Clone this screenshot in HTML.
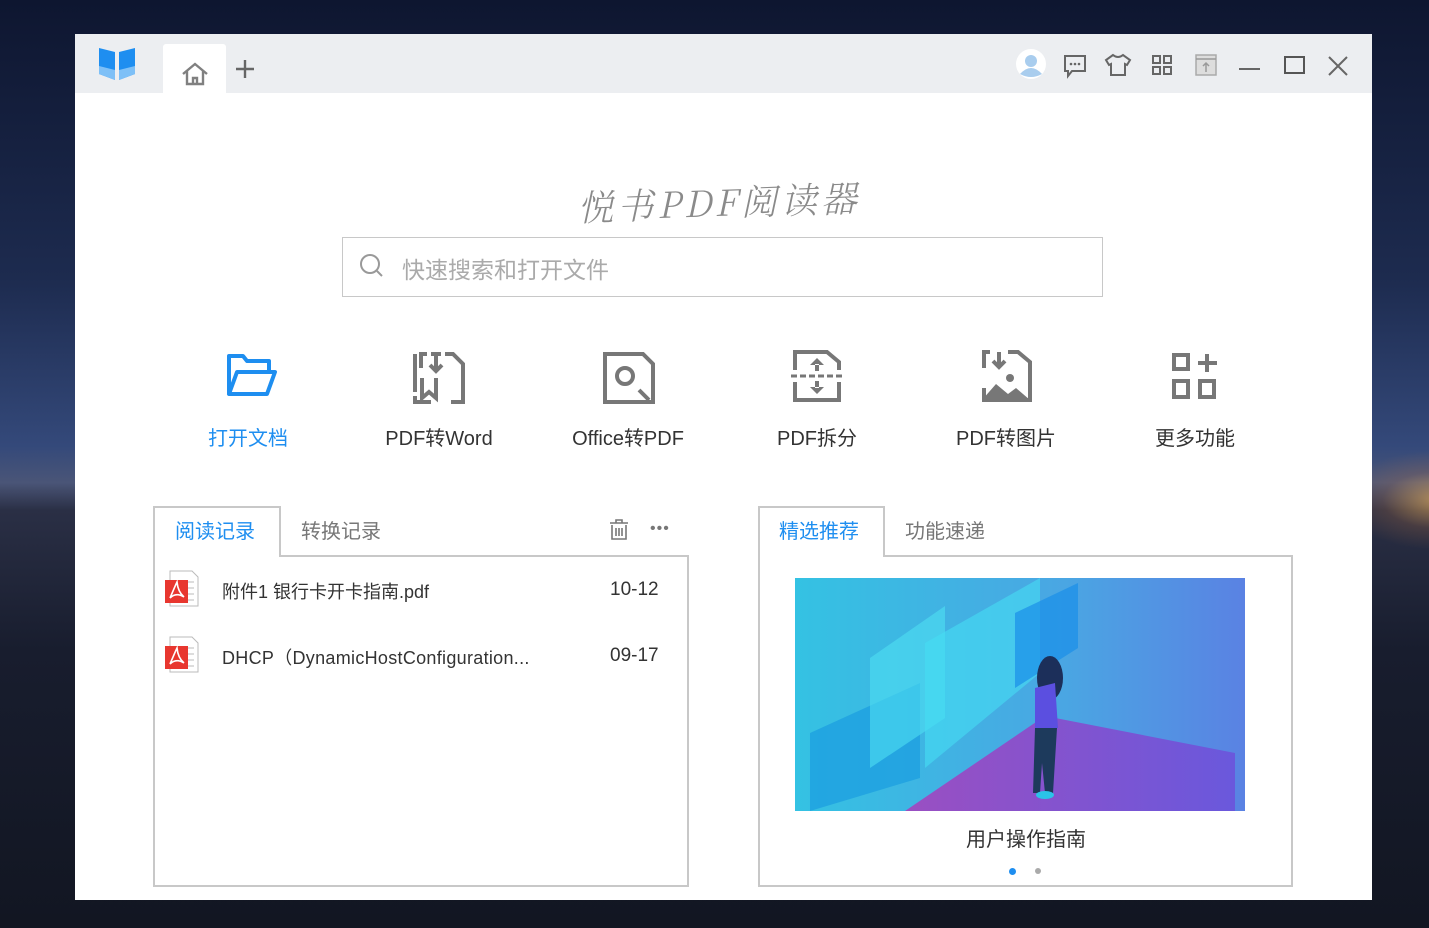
<!DOCTYPE html>
<html><head><meta charset="utf-8"><style>
*{margin:0;padding:0;box-sizing:border-box}
body{width:1429px;height:928px;overflow:hidden;position:relative;font-family:"Liberation Sans","Noto Sans CJK SC",sans-serif;
background:linear-gradient(180deg,#0e1630 0%,#1d2b4f 30%,#34497a 48%,#4a5577 52%,#2a2f45 55%,#181d2e 70%,#121622 100%);}
.glow{position:absolute;left:1340px;top:450px;width:140px;height:100px;background:radial-gradient(ellipse at 70% 50%,rgba(255,190,90,.6),rgba(200,120,60,.2) 40%,transparent 70%)}
.win{position:absolute;left:75px;top:34px;width:1297px;height:866px;background:#fff}
.bar{position:absolute;left:0;top:0;width:1297px;height:59px;background:#eceef1}
.a{position:absolute}
.tab0{left:88px;top:10px;width:63px;height:49px;background:#fff;border-radius:3px 3px 0 0}
.t{position:absolute;white-space:nowrap}
.f{font-size:20px;color:#333;text-align:center;width:160px}
.panel{position:absolute;border:2px solid #c8c8c8;border-top:none}
</style></head><body>
<div class="glow"></div>
<div class="win">
 <div class="bar">
  <svg class="a" style="left:22px;top:12px" width="40" height="36" viewBox="0 0 40 36"><path d="M2 2 L18 6 V34 L2 28Z" fill="#1e8ef0"/><path d="M38 2 L22 6 V34 L38 28Z" fill="#1e8ef0"/><path d="M2 20 L18 24 V34 L2 28Z" fill="#7ec0f7"/><path d="M38 20 L22 24 V34 L38 28Z" fill="#7ec0f7"/></svg>
  <div class="a tab0"></div>
  <svg class="a" style="left:105px;top:28px" width="30" height="24" viewBox="0 0 30 24"><path d="M3 12 L15 2 L27 12 M7 9 V22 H23 V9 M13 22 V16 H17 V22" fill="none" stroke="#808080" stroke-width="2.4"/></svg>
  <svg class="a" style="left:159px;top:24px" width="22" height="22"><path d="M11 2V20M2 11H20" stroke="#666" stroke-width="2.4"/></svg>
  <svg class="a" style="left:940px;top:14px" width="32" height="32"><circle cx="16" cy="16" r="15" fill="#fff"/><circle cx="16" cy="13" r="6" fill="#a9cdee"/><path d="M5 26 Q16 14 27 26 Q16 32 5 26Z" fill="#a9cdee"/></svg>
  <svg class="a" style="left:988px;top:20px" width="24" height="26"><path d="M2 2H22V17H9L5 22V17H2Z" fill="none" stroke="#666" stroke-width="2"/><circle cx="8" cy="10" r="1.3" fill="#666"/><circle cx="12" cy="10" r="1.3" fill="#666"/><circle cx="16" cy="10" r="1.3" fill="#666"/></svg>
  <svg class="a" style="left:1029px;top:19px" width="28" height="24"><path d="M9 2 L2 7 L5 12 L7 11 V22 H21 V11 L23 12 L26 7 L19 2 Q14 6 9 2Z" fill="none" stroke="#666" stroke-width="2"/></svg>
  <svg class="a" style="left:1076px;top:20px" width="22" height="22"><rect x="2" y="2" width="7" height="7" fill="none" stroke="#666" stroke-width="2"/><rect x="13" y="2" width="7" height="7" fill="none" stroke="#666" stroke-width="2"/><rect x="2" y="13" width="7" height="7" fill="none" stroke="#666" stroke-width="2"/><rect x="13" y="13" width="7" height="7" fill="none" stroke="#666" stroke-width="2"/></svg>
  <svg class="a" style="left:1120px;top:20px" width="22" height="22"><rect x="1" y="1" width="20" height="20" fill="#ddd" stroke="#aaa" stroke-width="1.5"/><path d="M1 5H21M11 18V9M8 12L11 9L14 12" stroke="#999" stroke-width="1.5" fill="none"/></svg>
  <div class="a" style="left:1164px;top:34px;width:21px;height:2px;background:#666"></div>
  <div class="a" style="left:1209px;top:22px;width:21px;height:18px;border:2px solid #555"></div>
  <svg class="a" style="left:1252px;top:21px" width="22" height="22"><path d="M2 2L20 20M20 2L2 20" stroke="#666" stroke-width="2"/></svg>
 </div>
 <div class="t" style="left:502px;top:142px;font-size:36px;color:#8a8a8a;font-family:'Noto Serif CJK SC',serif;font-style:italic;font-weight:300;letter-spacing:4px;transform:rotate(-2deg)">悦书PDF阅读器</div>
 <div class="a" style="left:267px;top:203px;width:761px;height:60px;border:1px solid #c8c8c8"></div>
 <svg class="a" style="left:284px;top:219px" width="26" height="26"><circle cx="11" cy="11" r="9" fill="none" stroke="#999" stroke-width="2"/><path d="M18 18L23 23" stroke="#999" stroke-width="2"/></svg>
 <div class="t" style="left:327px;top:217px;font-size:23px;color:#aaa">快速搜索和打开文件</div>

 <svg class="a" style="left:150px;top:316px" width="55" height="50" viewBox="0 0 55 50"><path d="M4 44V6H18L22 11H44V22" fill="none" stroke="#1e8ef0" stroke-width="4" stroke-linejoin="round"/><path d="M4 44H42L50 22H12Z" fill="none" stroke="#1e8ef0" stroke-width="4" stroke-linejoin="round"/></svg>
 <svg class="a" style="left:338px;top:316px" width="54" height="56" viewBox="0 0 54 56"><path d="M8 18V4H14M32 4H40L50 14V52H38M18 52H2V46M2 42V4" fill="none" stroke="#777" stroke-width="4"/><path d="M18 4H28M23 6V20M17 15L23 21L29 15" stroke="#777" stroke-width="4" fill="none"/><path d="M9 28V48L16 42L23 48V28" fill="none" stroke="#777" stroke-width="4"/></svg>
 <svg class="a" style="left:528px;top:316px" width="54" height="56" viewBox="0 0 54 56"><path d="M40 52H2V4H40L50 14V42" fill="none" stroke="#777" stroke-width="4"/><circle cx="22" cy="26" r="8" fill="none" stroke="#777" stroke-width="4"/><path d="M36 40L46 50M50 40V52H38" stroke="#777" stroke-width="4" fill="none"/></svg>
 <svg class="a" style="left:716px;top:314px" width="54" height="56" viewBox="0 0 54 56"><path d="M4 22V4H36L48 14V22M4 34V52H48V34" fill="none" stroke="#777" stroke-width="4"/><path d="M0 28H52" stroke="#777" stroke-width="3" stroke-dasharray="6 3"/><path d="M26 10L19 17H33ZM24 16H28V23H24ZM26 46L19 39H33ZM24 40H28V33H24Z" fill="#777"/></svg>
 <svg class="a" style="left:905px;top:314px" width="54" height="56" viewBox="0 0 54 56"><path d="M4 20V4H10M28 4H38L50 14V52H4V40" fill="none" stroke="#777" stroke-width="4"/><path d="M19 4V18M13 13L19 19L25 13" stroke="#777" stroke-width="4" fill="none"/><path d="M2 52L16 36L28 46L36 40L50 52Z" fill="#777"/><circle cx="30" cy="30" r="4" fill="#777"/></svg>
 <svg class="a" style="left:1096px;top:318px" width="48" height="50" viewBox="0 0 48 50"><rect x="3" y="3" width="14" height="14" fill="none" stroke="#777" stroke-width="4"/><rect x="3" y="29" width="14" height="16" fill="none" stroke="#777" stroke-width="4"/><rect x="29" y="29" width="14" height="16" fill="none" stroke="#777" stroke-width="4"/><path d="M36 2V20M27 11H46" stroke="#777" stroke-width="4"/></svg>

 <div class="t f" style="left:93px;top:388px;color:#1e8ef0">打开文档</div>
 <div class="t f" style="left:284px;top:388px">PDF转Word</div>
 <div class="t f" style="left:473px;top:388px">Office转PDF</div>
 <div class="t f" style="left:662px;top:388px">PDF拆分</div>
 <div class="t f" style="left:851px;top:388px">PDF转图片</div>
 <div class="t f" style="left:1040px;top:388px">更多功能</div>

 <div class="panel" style="left:78px;top:521px;width:536px;height:332px"></div>
 <div class="a" style="left:205px;top:521px;width:409px;height:2px;background:#c8c8c8"></div>
 <div class="a" style="left:78px;top:472px;width:128px;height:51px;background:#fff;border:2px solid #c8c8c8;border-bottom:none"></div>
 <div class="t" style="left:100px;top:481px;font-size:20px;color:#1e8ef0">阅读记录</div>
 <div class="t" style="left:226px;top:481px;font-size:20px;color:#777">转换记录</div>
 <svg class="a" style="left:533px;top:485px" width="22" height="22"><path d="M2 4H20M8 4V1H14V4M4 6V20H18V6M8 9V17M11 9V17M14 9V17" stroke="#777" stroke-width="1.6" fill="none"/></svg>
 <div class="t" style="left:575px;top:486px;font-size:16px;color:#777;letter-spacing:1px">•••</div>
 <svg class="a" style="left:89px;top:536px" width="38" height="38"><path d="M6 1H28L34 7V36H6Z" fill="#fff" stroke="#bbb"/><path d="M16 12H30M16 18H30M16 24H30M16 30H30" stroke="#bbb"/><rect x="1" y="10" width="23" height="23" fill="#e8372f"/><path d="M6 28Q12 14 13 12Q14 22 20 27Q12 22 6 28" fill="none" stroke="#fff" stroke-width="1.6"/></svg>
 <svg class="a" style="left:89px;top:602px" width="38" height="38"><path d="M6 1H28L34 7V36H6Z" fill="#fff" stroke="#bbb"/><path d="M16 12H30M16 18H30M16 24H30M16 30H30" stroke="#bbb"/><rect x="1" y="10" width="23" height="23" fill="#e8372f"/><path d="M6 28Q12 14 13 12Q14 22 20 27Q12 22 6 28" fill="none" stroke="#fff" stroke-width="1.6"/></svg>
 <div class="t" style="left:147px;top:544px;font-size:18px;color:#333">附件1 银行卡开卡指南.pdf</div>
 <div class="t" style="left:535px;top:545px;font-size:19px;color:#333">10-12</div>
 <div class="t" style="left:147px;top:610px;font-size:18px;color:#333;letter-spacing:.3px">DHCP（DynamicHostConfiguration...</div>
 <div class="t" style="left:535px;top:611px;font-size:19px;color:#333">09-17</div>

 <div class="panel" style="left:683px;top:521px;width:535px;height:332px"></div>
 <div class="a" style="left:808px;top:521px;width:410px;height:2px;background:#c8c8c8"></div>
 <div class="a" style="left:683px;top:472px;width:127px;height:51px;background:#fff;border:2px solid #c8c8c8;border-bottom:none"></div>
 <div class="t" style="left:704px;top:481px;font-size:20px;color:#1e8ef0">精选推荐</div>
 <div class="t" style="left:830px;top:481px;font-size:20px;color:#777">功能速递</div>
 <svg class="a" style="left:720px;top:544px" width="450" height="233" viewBox="0 0 450 233">
  <defs><linearGradient id="g" x1="0" x2="1"><stop offset="0" stop-color="#34c2e3"/><stop offset=".6" stop-color="#4aa6e3"/><stop offset="1" stop-color="#5a82e3"/></linearGradient>
  <linearGradient id="fl" x1="0" x2="1"><stop offset="0" stop-color="#9a4fc2"/><stop offset="1" stop-color="#6a58dc"/></linearGradient></defs>
  <rect width="450" height="233" fill="url(#g)"/>
  <path d="M15 155L125 105V200L15 233Z" fill="#1ea0e0" opacity=".8"/>
  <path d="M75 80L150 28V140L75 190Z" fill="#4fe0f2" opacity=".6"/>
  <path d="M130 65L245 0V95L130 190Z" fill="#46def4" opacity=".6"/>
  <path d="M220 35L283 5V70L220 110Z" fill="#1a8fe8" opacity=".7"/>
  <path d="M110 233L250 138L440 175V233Z" fill="url(#fl)"/>
  <ellipse cx="255" cy="100" rx="13" ry="22" fill="#1c2f5a"/>
  <path d="M240 110L260 105L263 150L240 150Z" fill="#5b4fe0"/>
  <path d="M240 150L262 150L258 215L250 215L247 185L245 215L238 215Z" fill="#1d3a5c"/>
  <ellipse cx="250" cy="217" rx="9" ry="4" fill="#2bc3e8"/>
 </svg>
 <div class="t" style="left:891px;top:789px;font-size:20px;color:#333">用户操作指南</div>
 <div class="a" style="left:934px;top:834px;width:7px;height:7px;border-radius:50%;background:#1e8ef0"></div>
 <div class="a" style="left:960px;top:834px;width:6px;height:6px;border-radius:50%;background:#aaa"></div>
</div>
</body></html>
